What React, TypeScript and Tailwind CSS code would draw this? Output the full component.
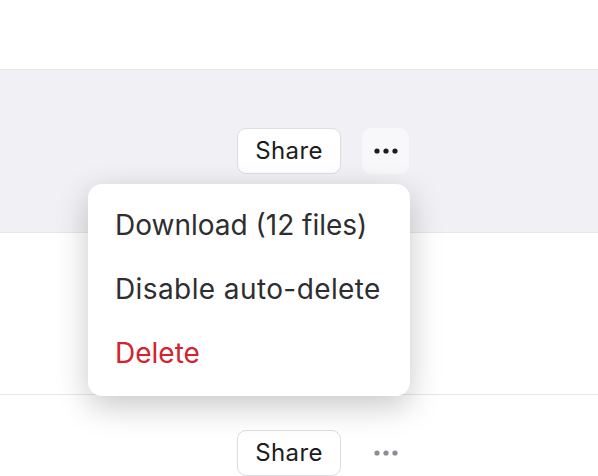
const font = { fontFamily: "Inter, 'Noto Sans', sans-serif" };

function Dots({ color }: { color: string }) {
  return (
    <svg width="30" height="8" viewBox="0 0 30 8" className={color}>
      <circle cx="6" cy="4" r="2.6" fill="currentColor" />
      <circle cx="15" cy="4" r="2.6" fill="currentColor" />
      <circle cx="24" cy="4" r="2.6" fill="currentColor" />
    </svg>
  );
}

function Actions({ active }: { active?: boolean }) {
  return (
    <div className="flex items-center gap-[21px]">
      <button className="h-[46px] w-[104px] rounded-[9px] border border-[#dcdce2] bg-white text-[24px] tracking-[0.4px] text-[#1c1c1e]">
        Share
      </button>
      <button
        className={`flex h-[46px] w-[47px] items-center justify-center rounded-[9px] ${
          active ? "bg-[#f8f8fa]" : ""
        }`}
      >
        <Dots color={active ? "text-[#1c1c1e]" : "text-[#8b8b99]"} />
      </button>
    </div>
  );
}

export default function App() {
  return (
    <div className="relative h-[476px] w-[598px] overflow-hidden bg-white" style={font}>
      <div className="h-[70px] border-b border-[#e6e6ea]" />
      <div className="flex h-[163px] items-start justify-end border-b border-[#e6e6ea] bg-[#f1f1f5] pr-[189px] pt-[58px]">
        <Actions active />
      </div>
      <div className="h-[162px] border-b border-[#e6e6ea]" />
      <div className="flex items-start justify-end pr-[189px] pt-[35px]">
        <Actions />
      </div>

      <div className="absolute left-[88px] top-[184px] w-[322px] rounded-[14px] bg-white pb-[11px] pt-[9px] shadow-[0_10px_32px_rgba(0,0,0,0.22)]">
        {[
          { label: "Download (12 files)", cls: "text-[#2e2e30]" },
          { label: "Disable auto-delete", cls: "text-[#2e2e30] tracking-[0.4px]" },
          { label: "Delete", cls: "text-[#d1242f]" },
        ].map((item) => (
          <div key={item.label} className={`flex h-[64px] items-center px-[27px] text-[28px] ${item.cls}`}>
            {item.label}
          </div>
        ))}
      </div>
    </div>
  );
}
